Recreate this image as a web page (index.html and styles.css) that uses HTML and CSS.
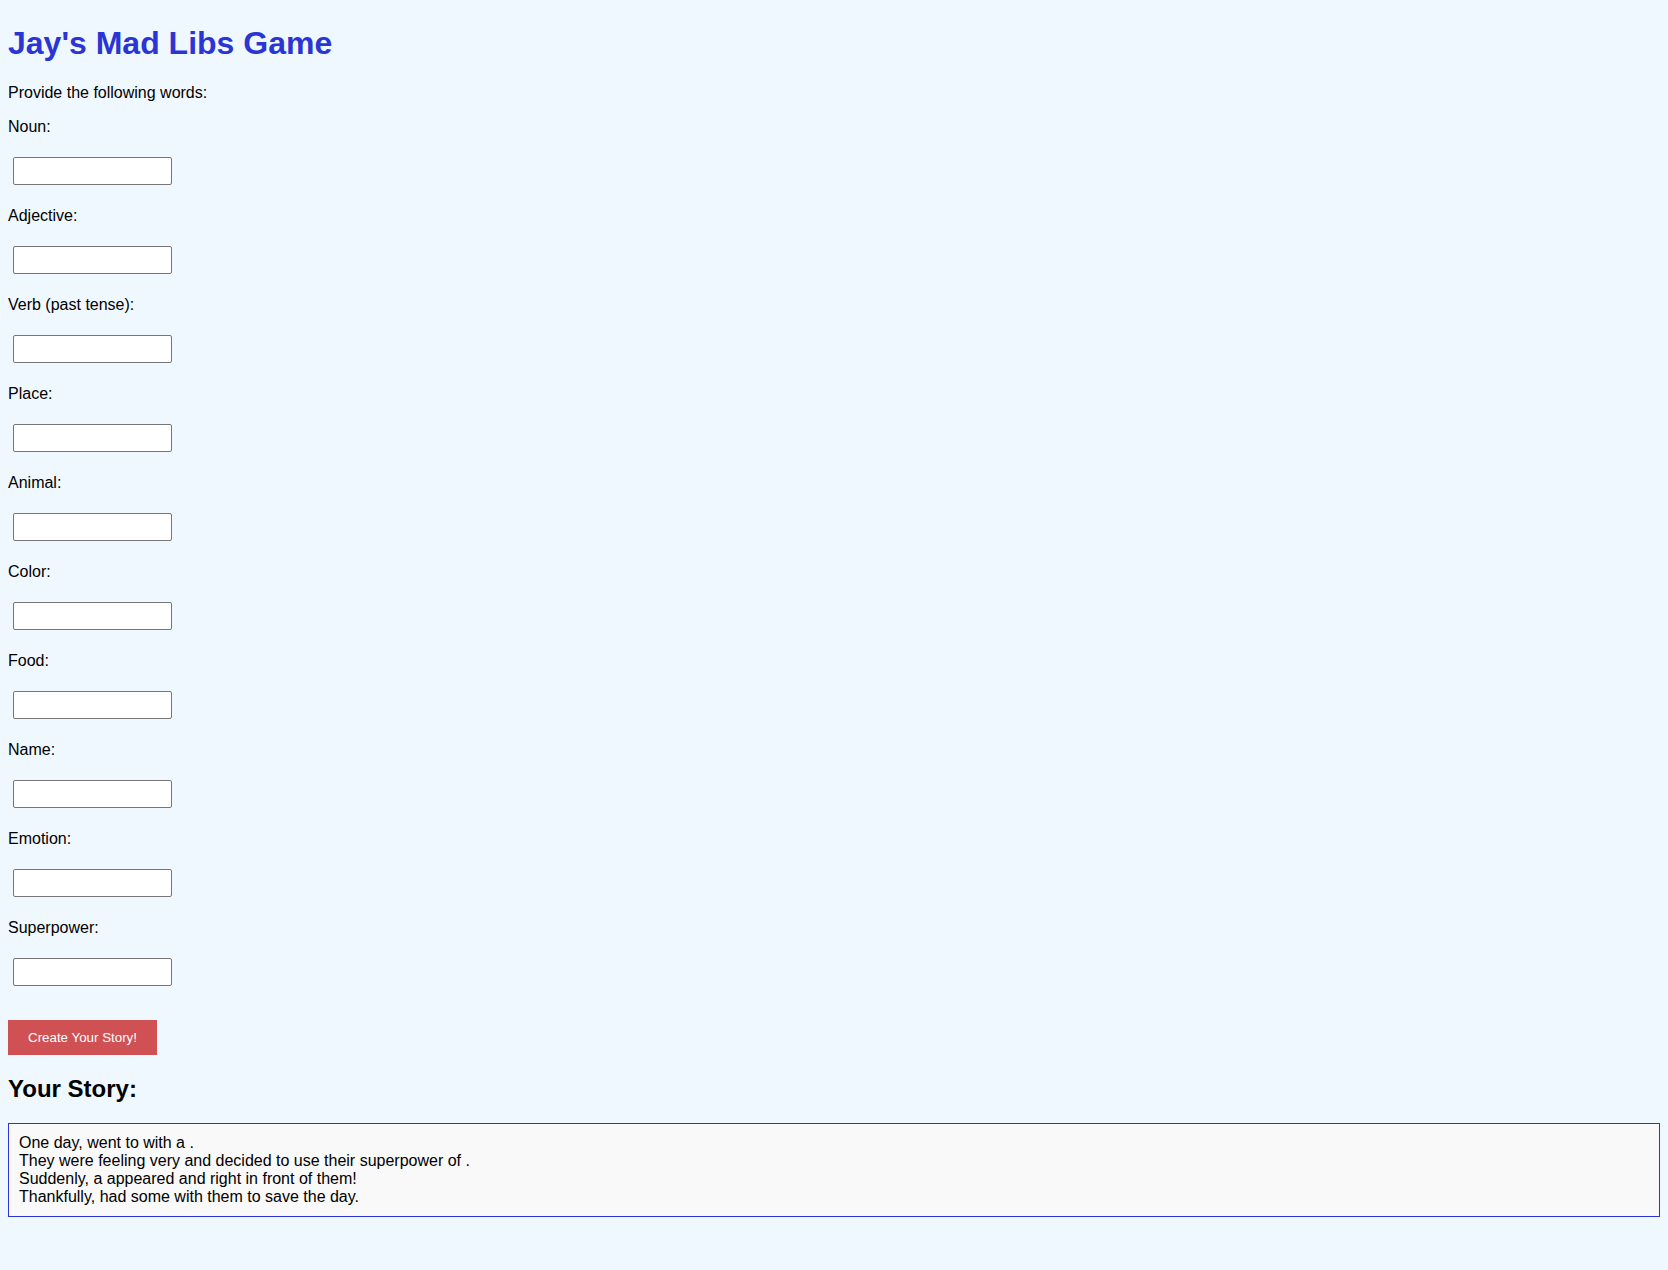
FILE: index.html
```html
<!DOCTYPE html>
<html lang="en">
<head>
<meta charset="utf-8">
<title>Jay's Mad Libs Game</title>
<link rel="stylesheet" href="styles.css">
</head>
<body>
<h1 class="title">Jay's Mad Libs Game</h1>
<p class="intro">Provide the following words:</p>
<form class="words">
  <label class="word-label">Noun:</label>
  <input class="word-input" type="text">
  <label class="word-label">Adjective:</label>
  <input class="word-input" type="text">
  <label class="word-label">Verb (past tense):</label>
  <input class="word-input" type="text">
  <label class="word-label">Place:</label>
  <input class="word-input" type="text">
  <label class="word-label">Animal:</label>
  <input class="word-input" type="text">
  <label class="word-label">Color:</label>
  <input class="word-input" type="text">
  <label class="word-label">Food:</label>
  <input class="word-input" type="text">
  <label class="word-label">Name:</label>
  <input class="word-input" type="text">
  <label class="word-label">Emotion:</label>
  <input class="word-input" type="text">
  <label class="word-label">Superpower:</label>
  <input class="word-input" type="text">
  <button class="create-btn" type="button">Create Your Story!</button>
</form>
<h2 class="story-title">Your Story:</h2>
<div class="story">One day, went to with a .<br>They were feeling very and decided to use their superpower of .<br>Suddenly, a appeared and right in front of them!<br>Thankfully, had some with them to save the day.</div>
</body>
</html>
```
FILE: styles.css
```css
html {
  background: #f0f8ff;
}
body {
  margin: 8px;
  font-family: "Liberation Sans", Arial, sans-serif;
  font-size: 16px;
  color: #000;
  background: #f0f8ff;
}
.title {
  font-size: 32px;
  font-weight: bold;
  color: #2b35d4;
  margin: 17px 0 22px;
}
.intro {
  margin: 0 0 16px;
}
.words {
  display: flex;
  flex-direction: column;
  align-items: flex-start;
}
.word-label {
  display: block;
  line-height: normal;
}
.word-input {
  display: block;
  box-sizing: border-box;
  width: 159px;
  height: 28px;
  margin: 21px 5px 22px;
  padding: 4px 5px;
  border: 1px solid #767676;
  border-radius: 2px;
  background: #fff;
  font-family: "Liberation Sans", Arial, sans-serif;
  font-size: 13.33px;
}
.create-btn {
  box-sizing: border-box;
  width: 149px;
  height: 35px;
  margin-top: 12px;
  padding: 0;
  border: none;
  background: #d05154;
  color: #fff;
  font-family: "Liberation Sans", Arial, sans-serif;
  font-size: 13.33px;
  cursor: pointer;
}
.story-title {
  font-size: 24px;
  font-weight: bold;
  margin: 20px 0 20px;
}
.story {
  border: 1px solid #2b35d4;
  background: #f9f9f9;
  padding: 10px 10px;
  line-height: normal;
}
```
